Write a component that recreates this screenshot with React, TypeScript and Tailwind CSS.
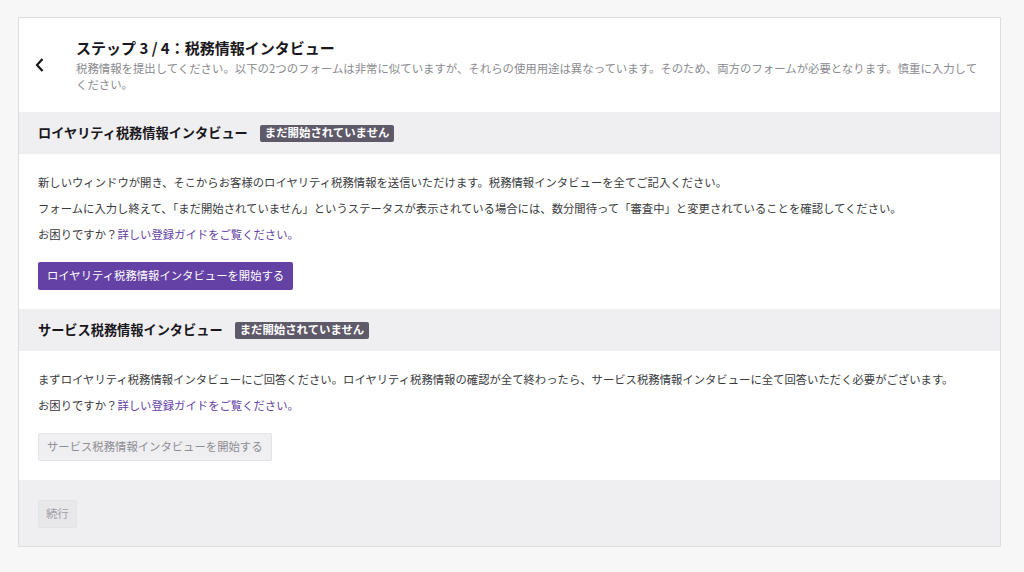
import React from "react";

const font = { fontFamily: '"Noto Sans CJK JP", "Noto Sans", sans-serif' };

function Badge() {
  return (
    <span className="ml-[12px] inline-flex h-[17px] items-center rounded-[2px] bg-[#5f5a6a] px-[5px] text-[11.4px] font-bold leading-none text-white">
      まだ開始されていません
    </span>
  );
}

function SectionHeader({ title }: { title: string }) {
  return (
    <div className="flex h-[42px] items-center bg-[#efeff1] px-[19px]">
      <span className="text-[13.2px] font-bold text-[#19171c]">{title}</span>
      <Badge />
    </div>
  );
}

function Help() {
  return (
    <p className="leading-[16px]">
      お困りですか？<span className="text-[#6441a4]">詳しい登録ガイドをご覧ください。</span>
    </p>
  );
}

export default function App() {
  return (
    <div className="min-h-[572px] w-[1024px] bg-[#f7f7f8] pt-[17px]" style={font}>
      <div className="ml-[18px] w-[983px] border border-[#dedde2] bg-white">
        {/* header */}
        <div className="flex px-[19px] pb-[20px] pt-[19px]">
          <div className="flex w-[38px] items-center">
            <svg width="12" height="16" viewBox="0 0 12 16" className="-ml-[4px] mt-[1px]">
              <path d="M8.5 2 L3 8 L8.5 14" fill="none" stroke="#19171c" strokeWidth="2.2" />
            </svg>
          </div>
          <div className="flex-1">
            <h1 className="text-[15px] font-bold leading-[22px] text-[#19171c]">ステップ 3 / 4：税務情報インタビュー</h1>
            <p className="mt-[1px] text-[11.4px] leading-[16px] text-[#8a8a8f]">
              税務情報を提出してください。以下の2つのフォームは非常に似ていますが、それらの使用用途は異なっています。そのため、両方のフォームが必要となります。慎重に入力してください。
            </p>
          </div>
        </div>

        <SectionHeader title="ロイヤリティ税務情報インタビュー" />
        <div className="px-[19px] pb-[19px] pt-[20px] text-[11.35px] text-[#3a3a3d]">
          <div className="flex flex-col gap-[10px]">
            <p className="leading-[16px]">新しいウィンドウが開き、そこからお客様のロイヤリティ税務情報を送信いただけます。税務情報インタビューを全てご記入ください。</p>
            <p className="leading-[16px]">フォームに入力し終えて、「まだ開始されていません」というステータスが表示されている場合には、数分間待って「審査中」と変更されていることを確認してください。</p>
            <Help />
          </div>
          <button className="mt-[20px] h-[28px] rounded-[2px] bg-[#6441a4] px-[9px] text-[11.35px] text-white">
            ロイヤリティ税務情報インタビューを開始する
          </button>
        </div>

        <SectionHeader title="サービス税務情報インタビュー" />
        <div className="px-[19px] pb-[19px] pt-[20px] text-[11.35px] text-[#3a3a3d]">
          <div className="flex flex-col gap-[10px]">
            <p className="leading-[16px]">まずロイヤリティ税務情報インタビューにご回答ください。ロイヤリティ税務情報の確認が全て終わったら、サービス税務情報インタビューに全て回答いただく必要がございます。</p>
            <Help />
          </div>
          <button className="mt-[20px] h-[28px] rounded-[2px] border border-[#e3e3e6] bg-[#efeff1] px-[8px] text-[11.35px] text-[#8d8d92]">
            サービス税務情報インタビューを開始する
          </button>
        </div>

        <div className="bg-[#efeff1] px-[19px] pb-[18px] pt-[19px]">
          <button className="h-[28px] rounded-[2px] border border-[#e3e3e6] bg-[#e8e8eb] px-[7px] text-[11.35px] text-[#a0a0a5]">
            続行
          </button>
        </div>
      </div>
    </div>
  );
}
